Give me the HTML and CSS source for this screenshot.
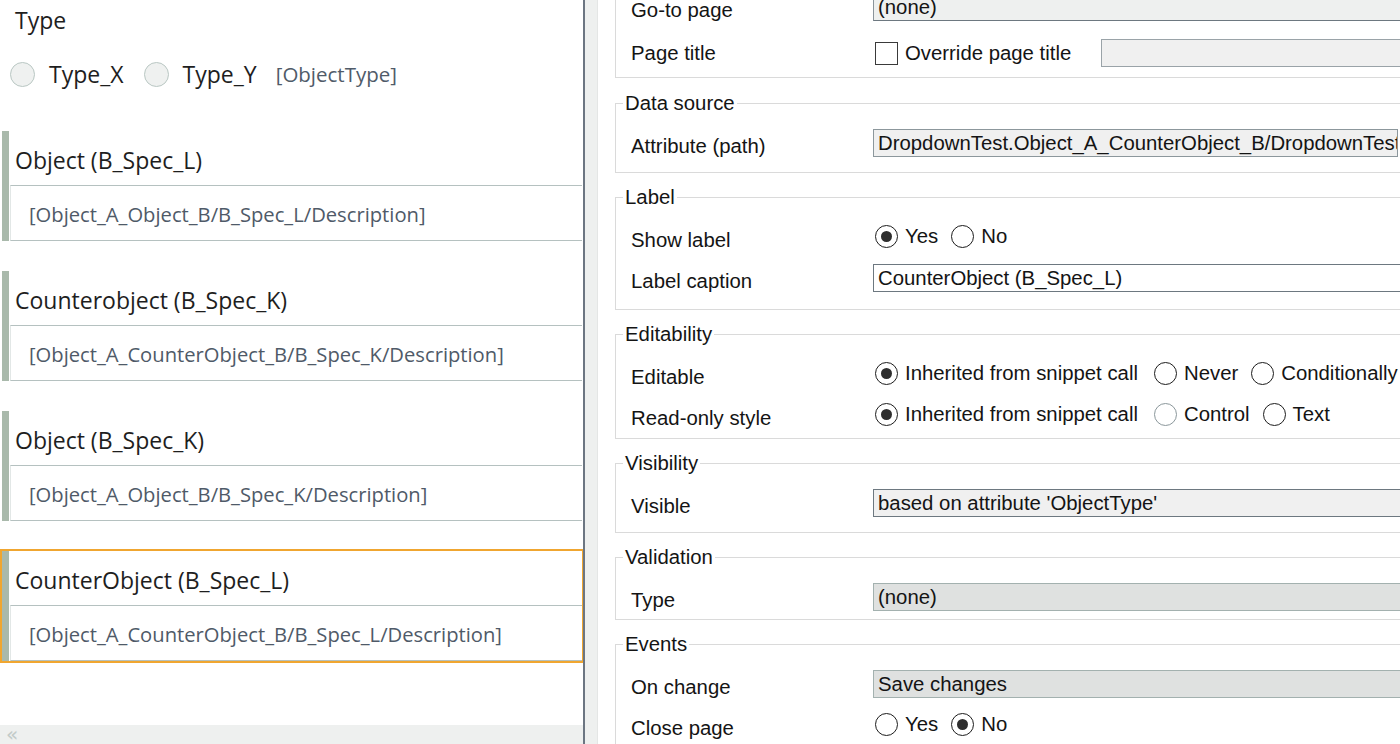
FILE: index.html
```html
<!DOCTYPE html>
<html>
<head>
<meta charset="utf-8">
<link rel="stylesheet" href="styles.css">
</head>
<body>
<div class="app">
  <div class="canvas">
    <div class="type-label">Type</div>
    <div class="type-options">
      <span class="lradio"></span><span class="opt-text">Type_X</span>
      <span class="lradio"></span><span class="opt-text">Type_Y</span>
      <span class="attr-ref">[ObjectType]</span>
    </div>
    <div class="cards">
      <div class="card">
        <div class="card-bar"></div>
        <div class="card-body">
          <div class="card-title">Object (B_Spec_L)</div>
          <div class="card-desc">[Object_A_Object_B/B_Spec_L/Description]</div>
        </div>
      </div>
      <div class="card">
        <div class="card-bar"></div>
        <div class="card-body">
          <div class="card-title">Counterobject (B_Spec_K)</div>
          <div class="card-desc">[Object_A_CounterObject_B/B_Spec_K/Description]</div>
        </div>
      </div>
      <div class="card">
        <div class="card-bar"></div>
        <div class="card-body">
          <div class="card-title">Object (B_Spec_K)</div>
          <div class="card-desc">[Object_A_Object_B/B_Spec_K/Description]</div>
        </div>
      </div>
      <div class="card selected">
        <div class="card-bar"></div>
        <div class="card-body">
          <div class="card-title">CounterObject (B_Spec_L)</div>
          <div class="card-desc">[Object_A_CounterObject_B/B_Spec_L/Description]</div>
        </div>
      </div>
    </div>
    <div class="hscroll"><span class="chev">«</span></div>
  </div>
  <div class="splitter"></div>
  <div class="props">
    <fieldset class="fs fs-top">
      <div class="rows rows-top">
        <div class="row">
          <span class="lbl">Go-to page</span>
          <div class="input goto">(none)</div>
        </div>
        <div class="row">
          <span class="lbl lbl-mid">Page title</span>
          <div class="opts">
            <span class="cb"></span><span class="cb-text">Override page title</span>
            <div class="input page-title"></div>
          </div>
        </div>
      </div>
    </fieldset>

    <fieldset class="fs">
      <legend>Data source</legend>
      <div class="rows">
        <div class="row">
          <span class="lbl">Attribute (path)</span>
          <div class="input attr">DropdownTest.Object_A_CounterObject_B/DropdownTest.B_Spec_L</div>
        </div>
      </div>
    </fieldset>

    <fieldset class="fs fs-label">
      <legend>Label</legend>
      <div class="rows">
        <div class="row">
          <span class="lbl">Show label</span>
          <div class="opts">
            <span class="opt"><span class="rb on"></span>Yes</span>
            <span class="opt"><span class="rb"></span>No</span>
          </div>
        </div>
        <div class="row">
          <span class="lbl">Label caption</span>
          <div class="input white">CounterObject (B_Spec_L)</div>
        </div>
      </div>
    </fieldset>

    <fieldset class="fs fs-edit">
      <legend>Editability</legend>
      <div class="rows">
        <div class="row">
          <span class="lbl">Editable</span>
          <div class="opts">
            <span class="opt opt-wide"><span class="rb on"></span>Inherited from snippet call</span>
            <span class="opt"><span class="rb"></span>Never</span>
            <span class="opt"><span class="rb"></span>Conditionally</span>
          </div>
        </div>
        <div class="row">
          <span class="lbl">Read-only style</span>
          <div class="opts">
            <span class="opt opt-wide"><span class="rb on"></span>Inherited from snippet call</span>
            <span class="opt"><span class="rb faint"></span>Control</span>
            <span class="opt"><span class="rb"></span>Text</span>
          </div>
        </div>
      </div>
    </fieldset>

    <fieldset class="fs">
      <legend>Visibility</legend>
      <div class="rows">
        <div class="row">
          <span class="lbl">Visible</span>
          <div class="input">based on attribute 'ObjectType'</div>
        </div>
      </div>
    </fieldset>

    <fieldset class="fs fs-val">
      <legend>Validation</legend>
      <div class="rows">
        <div class="row">
          <span class="lbl">Type</span>
          <div class="input dis">(none)</div>
        </div>
      </div>
    </fieldset>

    <fieldset class="fs">
      <legend>Events</legend>
      <div class="rows">
        <div class="row">
          <span class="lbl">On change</span>
          <div class="input dis">Save changes</div>
        </div>
        <div class="row">
          <span class="lbl">Close page</span>
          <div class="opts">
            <span class="opt"><span class="rb"></span>Yes</span>
            <span class="opt"><span class="rb on"></span>No</span>
          </div>
        </div>
      </div>
    </fieldset>
  </div>
</div>
</body>
</html>
```

FILE: styles.css
```css
* { box-sizing: border-box; }
html, body { margin: 0; padding: 0; }
body {
  width: 1400px;
  height: 744px;
  overflow: hidden;
  background: #ffffff;
}
.app {
  display: flex;
  height: 744px;
}

/* ---------- left canvas ---------- */
.canvas {
  width: 583px;
  flex: none;
  display: flex;
  flex-direction: column;
  font-family: "Open Sans", sans-serif;
  color: #1e1e1e;
  background: #ffffff;
}
.type-label {
  font-size: 23px;
  line-height: 28px;
  margin: 6px 0 0 15px;
}
.type-options {
  display: flex;
  align-items: center;
  height: 28px;
  margin: 26px 0 0 10px;
  font-size: 23px;
}
.lradio {
  width: 25px;
  height: 25px;
  border-radius: 50%;
  border: 1px solid #b9c7c3;
  background: #eff1f0;
  margin-right: 14px;
  flex: none;
}
.opt-text + .lradio { margin-left: 20px; }
.attr-ref {
  margin-left: 19px;
  font-size: 20.5px;
  color: #505b69;
}
.cards {
  margin-top: 41px;
  display: flex;
  flex-direction: column;
  gap: 26px;
}
.card {
  display: flex;
  height: 114px;
  border: 2px solid transparent;
  margin-right: -1px;
}
.card.selected { border-color: #f0a630; }
.card-bar {
  width: 7px;
  flex: none;
  background: #a9b9ab;
}
.card-body {
  flex: 1;
  margin-left: 1px;
  display: flex;
  flex-direction: column;
}
.card-title {
  height: 54px;
  padding: 15px 0 0 5px;
  font-size: 23px;
  line-height: 28px;
}
.card-desc {
  flex: 1;
  display: flex;
  align-items: center;
  padding: 2px 0 0 18px;
  border-top: 1px solid #b5c1c0;
  border-bottom: 1px solid #b5c1c0;
  border-left: 1px solid #e2e7e6;
  font-size: 20.2px;
  color: #4f5a68;
}
.hscroll {
  margin-top: auto;
  height: 19px;
  background: #eef0ef;
  display: flex;
  align-items: center;
  padding-left: 6px;
}
.chev {
  color: #c2cbc9;
  font-size: 20px;
  line-height: 19px;
  font-family: "DejaVu Sans", sans-serif;
}

/* ---------- splitter ---------- */
.splitter {
  width: 15px;
  flex: none;
  border-left: 2px solid #6c7682;
  border-right: 1px solid #e4e6e5;
  background: #eef0ef;
}

/* ---------- properties panel ---------- */
.props {
  flex: 1;
  min-width: 0;
  overflow: hidden;
  padding-left: 17px;
  font-family: "Liberation Sans", Arial, sans-serif;
  font-size: 20.35px;
  color: #141414;
}
.fs {
  border: 1px solid #dadada;
  margin: 0 -40px 12px 0;
  padding: 12px 0 17px 15px;
  min-width: 0;
}
.fs legend {
  font-size: 20.35px;
  line-height: 24px;
  padding: 0 2px;
  margin-left: -8px;
  color: #141414;
}
.fs-top {
  margin-top: -40px;
  padding-top: 30px;
  padding-bottom: 10px;
  margin-bottom: 13px;
}
.fs-label { padding-bottom: 19px; }
.fs-edit { padding-bottom: 11px; }
.fs-val { padding-bottom: 10px; }
.rows {
  display: flex;
  flex-direction: column;
  gap: 13px;
}
.rows-top { gap: 20px; }
.row {
  display: grid;
  grid-template-columns: 242px 1fr;
  align-items: center;
  height: 28px;
}
.lbl {
  padding-top: 8px;
  line-height: 23px;
  white-space: nowrap;
}
.lbl-mid { padding-top: 0; }
.input {
  height: 28px;
  border: 1px solid #6d7880;
  background: #f0f0f0;
  padding: 0 4px;
  line-height: 26px;
  white-space: nowrap;
  overflow: hidden;
}
.input.white { background: #ffffff; }
.input.dis {
  background: #dfe1e0;
  border-color: #a3b1af;
}
.input.goto {
  background: #eef0ef;
  border-color: #dadada #dadada #6d7880 #8a949b;
}
.input.attr {
  margin-right: 41px;
  border-color: #8c979c;
}
.opts {
  display: flex;
  align-items: center;
  white-space: nowrap;
}
.opt {
  display: flex;
  align-items: center;
  margin-right: 11px;
}
.opt-wide { margin-right: 14px; }
.rb {
  width: 23px;
  height: 23px;
  border-radius: 50%;
  border: 1.5px solid #1c1c1c;
  margin: 0 7px 0 2px;
  display: flex;
  align-items: center;
  justify-content: center;
  flex: none;
  background: #fff;
}
.rb.on::after {
  content: "";
  width: 11px;
  height: 11px;
  border-radius: 50%;
  background: #2e2e2e;
}
.rb.faint { border-color: #8b979b; }
.cb {
  width: 23px;
  height: 23px;
  border: 1px solid #3a3a3a;
  margin: 0 7px 0 2px;
  flex: none;
  background: #fff;
}
.cb-text { margin-right: 30px; }
.input.page-title {
  flex: 1;
  border-color: #9aa3a8;
}
```
